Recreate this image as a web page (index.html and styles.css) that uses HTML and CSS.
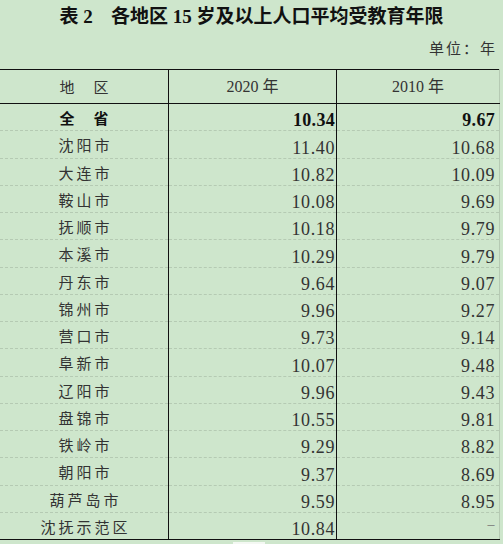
FILE: index.html
```html
<!DOCTYPE html>
<html lang="zh-CN">
<head>
<meta charset="utf-8">
<title>表2 各地区15岁及以上人口平均受教育年限</title>
<link rel="stylesheet" href="styles.css">
</head>
<body>
<div class="page">
  <h1 class="title">表 2<span class="gap"></span>各地区 15 岁及以上人口平均受教育年限</h1>
  <div class="unit">单位：年</div>
  <table class="data">
    <thead>
      <tr><th class="name">地<span class="sp"></span>区</th><th>2020 年</th><th class="last">2010 年</th></tr>
    </thead>
    <tbody>
      <tr class="total"><td class="name">全<span class="sp"></span>省</td><td class="num">10.34</td><td class="num last">9.67</td></tr>
      <tr><td class="name">沈阳市</td><td class="num">11.40</td><td class="num last">10.68</td></tr>
      <tr><td class="name">大连市</td><td class="num">10.82</td><td class="num last">10.09</td></tr>
      <tr><td class="name">鞍山市</td><td class="num">10.08</td><td class="num last">9.69</td></tr>
      <tr><td class="name">抚顺市</td><td class="num">10.18</td><td class="num last">9.79</td></tr>
      <tr><td class="name">本溪市</td><td class="num">10.29</td><td class="num last">9.79</td></tr>
      <tr><td class="name">丹东市</td><td class="num">9.64</td><td class="num last">9.07</td></tr>
      <tr><td class="name">锦州市</td><td class="num">9.96</td><td class="num last">9.27</td></tr>
      <tr><td class="name">营口市</td><td class="num">9.73</td><td class="num last">9.14</td></tr>
      <tr><td class="name">阜新市</td><td class="num">10.07</td><td class="num last">9.48</td></tr>
      <tr><td class="name">辽阳市</td><td class="num">9.96</td><td class="num last">9.43</td></tr>
      <tr><td class="name">盘锦市</td><td class="num">10.55</td><td class="num last">9.81</td></tr>
      <tr><td class="name">铁岭市</td><td class="num">9.29</td><td class="num last">8.82</td></tr>
      <tr><td class="name">朝阳市</td><td class="num">9.37</td><td class="num last">8.69</td></tr>
      <tr><td class="name">葫芦岛市</td><td class="num">9.59</td><td class="num last">8.95</td></tr>
      <tr class="end"><td class="name">沈抚示范区</td><td class="num">10.84</td><td class="num last dash">–</td></tr>
    </tbody>
  </table>
  <div class="scrap"></div>
</div>
</body>
</html>
```
FILE: styles.css
```css
html, body {
  margin: 0;
  padding: 0;
  background: #cee6cc;
}
.page {
  width: 503px;
  height: 544px;
  overflow: hidden;
  background: #cee6cc;
  color: #2b2b2b;
  font-family: "Liberation Serif", "Noto Sans CJK SC", serif;
}
.title {
  margin: 0;
  height: 34px;
  line-height: 34px;
  font-family: "Liberation Serif", "Noto Sans CJK SC", serif;
  font-size: 19px;
  font-weight: bold;
  color: #111;
  text-align: center;
}
.title .gap {
  display: inline-block;
  width: 18px;
}
.unit {
  height: 35px;
  line-height: 28px;
  text-align: right;
  padding-right: 6px;
  font-family: "Noto Sans CJK SC", sans-serif;
  font-size: 15px;
  letter-spacing: 2px;
  color: #333;
  box-sizing: border-box;
}
.data {
  width: 500px;
  border-collapse: collapse;
  table-layout: fixed;
}
.data th {
  height: 33px;
  padding: 0;
  border-top: 1px solid #111;
  border-bottom: 1px solid #111;
  border-right: 1px solid #111;
  font-weight: normal;
  font-family: "Liberation Serif", "Noto Sans CJK SC", serif;
  font-size: 16px;
  line-height: 20px;
  color: #333;
  text-align: center;
  vertical-align: middle;
}
.data th.name, .data td.name {
  width: 165px;
}
.data th:nth-child(2), .data td:nth-child(2) {
  width: 167px;
}
.data th.last, .data td.last {
  border-right: 1px solid #b5cab3;
}
.data td {
  height: 26.25px;
  padding: 0;
  border-bottom: 1px dashed #b5cab3;
  border-right: 1px solid #111;
}
.data td.name, .data th.name {
  font-family: "Noto Sans CJK SC", sans-serif;
  font-size: 15px;
  line-height: 20px;
  letter-spacing: 3px;
  text-align: center;
  vertical-align: middle;
  padding-left: 3px;
  color: #333;
}
.data td.name {
  height: 24.25px;
  padding-top: 2px;
}
.sp {
  display: inline-block;
  width: 16px;
}
.data td.num {
  height: 25.25px;
  text-align: right;
  vertical-align: bottom;
  font-size: 18px;
  line-height: 18px;
  letter-spacing: 0.6px;
  padding-right: 1px;
  padding-bottom: 1px;
  color: #333;
}
.data td.num.last {
  padding-right: 4px;
}
.data tr.total td {
  font-weight: bold;
  color: #111;
}
.data tr.total td.num {
  letter-spacing: 0.3px;
}
.data tr.end td {
  border-bottom: 1px solid #111;
}
.data td.dash {
  height: 21.25px;
  color: #777;
  font-size: 14px;
  padding-right: 10px;
  padding-bottom: 5px;
}
.scrap {
  margin-left: 233px;
  margin-top: 2px;
  width: 32px;
  height: 4px;
  background: #f4f8f3;
}
```
